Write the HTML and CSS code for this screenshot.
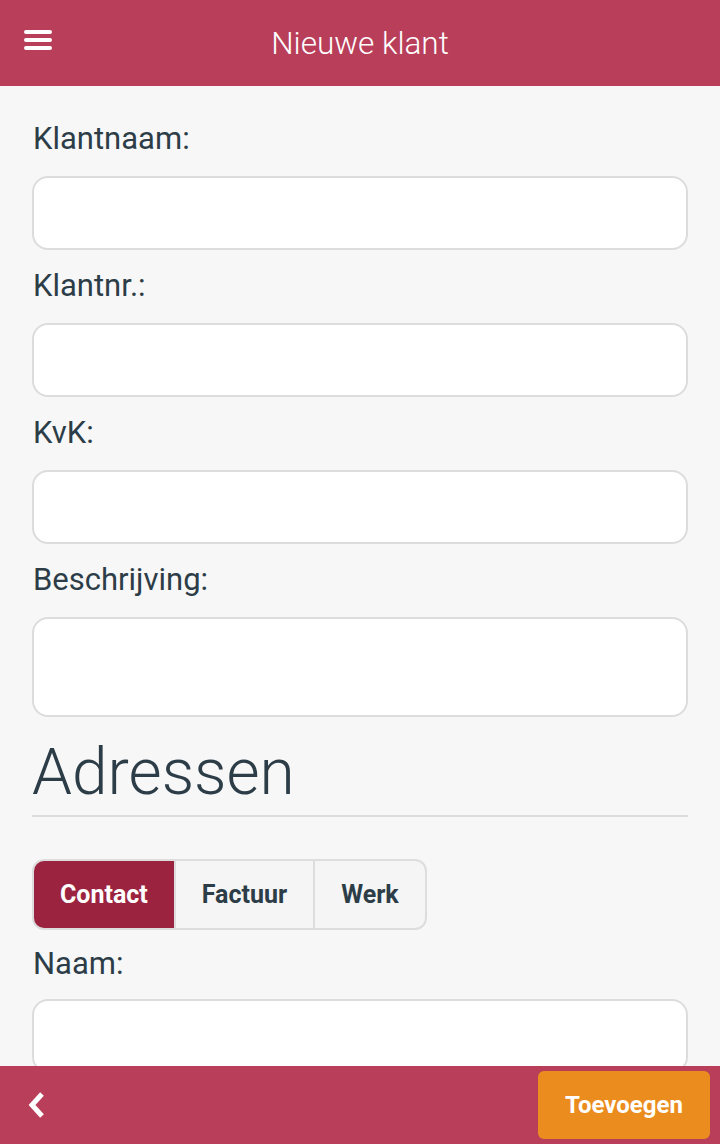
FILE: index.html
```html
<!DOCTYPE html>
<html>
<head>
	<title>Nieuwe klant</title>
	<meta charset=utf-8>
	<meta name=viewport content="width=720, initial-scale=1">
	<link rel="stylesheet" href="styles.css">
</head>
<body>
	<!-- bovenbalk -->
	<header class="topbar">
		<span class="menu">
			<svg width="28" height="20" viewBox="0 0 28 20"><g stroke="#fff" stroke-width="4" stroke-linecap="round"><line x1="2" y1="2" x2="26" y2="2"/><line x1="2" y1="10" x2="26" y2="10"/><line x1="2" y1="18" x2="26" y2="18"/></g></svg>
		</span>
		<h1 class="title">Nieuwe klant</h1>
	</header>

	<main class="content">
		<label class="lbl">Klantnaam:</label>
		<input class="field" type="text">

		<label class="lbl">Klantnr.:</label>
		<input class="field" type="text">

		<label class="lbl">KvK:</label>
		<input class="field" type="text">

		<label class="lbl">Beschrijving:</label>
		<textarea class="field area"></textarea>

		<h2 class="section">Adressen</h2>

		<div class="tabs">
			<button class="tab active">Contact</button>
			<button class="tab">Factuur</button>
			<button class="tab">Werk</button>
		</div>

		<label class="lbl tight">Naam:</label>
		<input class="field" type="text">
	</main>

	<!-- onderbalk -->
	<footer class="bottombar">
		<span class="back">
			<svg width="22" height="28" viewBox="0 0 22 28"><polyline points="16,3 6,14 16,25" fill="none" stroke="#fff" stroke-width="5" stroke-linejoin="miter"/></svg>
		</span>
		<button class="add">Toevoegen</button>
	</footer>
</body>
</html>
```

FILE: styles.css
```css
html, body {
	height: 100%;
}
body {
	margin: 0;
	font-family: Roboto, "Liberation Sans", sans-serif;
	background: #f7f7f7;
	color: #2c3d48;
	display: flex;
	flex-direction: column;
	overflow: hidden;
}
.topbar {
	flex: none;
	height: 86px;
	background: #b93e5a;
	display: flex;
	align-items: center;
	justify-content: center;
	position: relative;
}
.menu {
	position: absolute;
	left: 24px;
	top: 30px;
	line-height: 0;
}
.title {
	margin: 0;
	font-weight: 300;
	font-size: 31.5px;
	color: #fff;
}
.content {
	flex: 1;
	overflow: hidden;
	padding: 17px 32px 0;
	display: flex;
	flex-direction: column;
}
.lbl {
	flex: none;
	display: block;
	font-size: 31px;
	line-height: 40px;
	padding: 16px 0 17px 1px;
}
.lbl.tight {
	padding: 14px 0 15px 1px;
}
.field {
	flex: none;
	box-sizing: border-box;
	height: 74px;
	width: 100%;
	border: 2px solid #dcdcdc;
	border-radius: 16px;
	background: #fff;
	margin: 0;
	font: inherit;
}
.area {
	height: 100px;
	resize: none;
}
.section {
	flex: none;
	margin: 18px 0 0;
	font-weight: 300;
	font-size: 64px;
	line-height: 76px;
	padding-bottom: 4px;
	border-bottom: 2px solid #dddddd;
}
.tabs {
	flex: none;
	display: flex;
	align-self: flex-start;
	margin-top: 42px;
	border: 2px solid #dddddd;
	border-radius: 12px;
	overflow: hidden;
	background: #dddddd;
	gap: 2px;
}
.tab {
	border: none;
	margin: 0;
	height: 67px;
	padding: 0 26px;
	font-family: inherit;
	font-weight: 700;
	font-size: 25px;
	color: #2c3d48;
	background: #f5f5f5;
}
.tab.active {
	background: #9b2340;
	color: #fff;
}
.bottombar {
	flex: none;
	height: 78px;
	background: #b93e5a;
	display: flex;
	align-items: center;
	justify-content: space-between;
	padding: 0 10px 0 26px;
}
.back {
	line-height: 0;
}
.add {
	border: none;
	height: 68px;
	width: 172px;
	border-radius: 6px;
	background: #eb8c1e;
	color: #fff;
	font-family: inherit;
	font-weight: 700;
	font-size: 24px;
}
```
